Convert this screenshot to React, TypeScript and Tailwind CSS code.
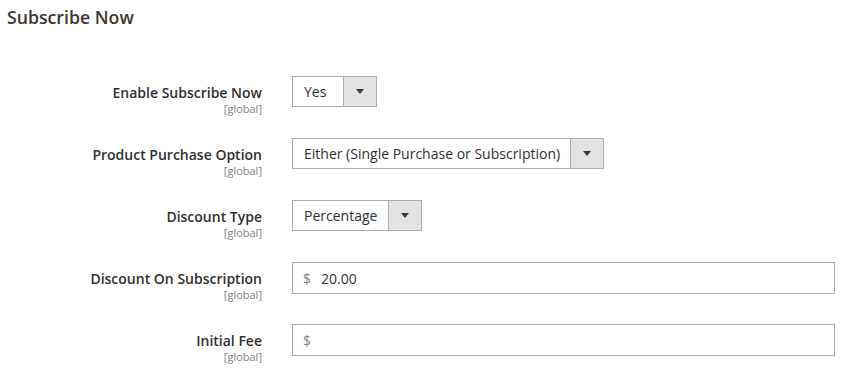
import { ReactNode } from 'react';

function Arrow() {
  return (
    <svg width="8" height="5" viewBox="0 0 8 5" className="text-[#41362f]">
      <path d="M0 0 L8 0 L4 5 Z" fill="currentColor" />
    </svg>
  );
}

function Select({ value, width }: { value: string; width: string }) {
  return (
    <div className={`flex h-[31px] ${width} border border-[#adadad] bg-white`}>
      <div className="flex flex-1 items-center pl-[11px] text-[14px] text-[#303030]">{value}</div>
      <div className="flex w-[33px] items-center justify-center border-l border-[#adadad] bg-[#e3e3e3]">
        <Arrow />
      </div>
    </div>
  );
}

function Price({ value }: { value?: string }) {
  return (
    <div className="flex h-[32px] w-full items-center border border-[#adadad] bg-white pl-[10px] text-[14px]">
      <span className="text-[#858585]">$</span>
      {value && <span className="ml-[10px] text-[#303030]">{value}</span>}
    </div>
  );
}

function Row({ label, children }: { label: string; children: ReactNode }) {
  return (
    <div className="flex h-[32px]">
      <div className="flex w-[262px] shrink-0 flex-col items-end pt-[7px]">
        <span className="text-[14px] font-semibold leading-[20px] text-[#303030]">{label}</span>
        <span className="text-[11px] leading-[11px] text-[#808080]">[global]</span>
      </div>
      <div className="ml-[30px] flex-1">{children}</div>
    </div>
  );
}

export default function App() {
  return (
    <div className="h-[380px] w-[850px] bg-white pr-[15px] font-['Open_Sans',sans-serif]">
      <h2 className="pl-[7px] pt-[5px] text-[17.7px] font-semibold leading-[24px] text-[#41362f]">Subscribe Now</h2>
      <div className="mt-[47px] flex flex-col gap-[30px]">
        <Row label="Enable Subscribe Now">
          <Select value="Yes" width="w-[85px]" />
        </Row>
        <Row label="Product Purchase Option">
          <Select value="Either (Single Purchase or Subscription)" width="w-[312px]" />
        </Row>
        <Row label="Discount Type">
          <Select value="Percentage" width="w-[130px]" />
        </Row>
        <Row label="Discount On Subscription">
          <Price value="20.00" />
        </Row>
        <Row label="Initial Fee">
          <Price />
        </Row>
      </div>
    </div>
  );
}
